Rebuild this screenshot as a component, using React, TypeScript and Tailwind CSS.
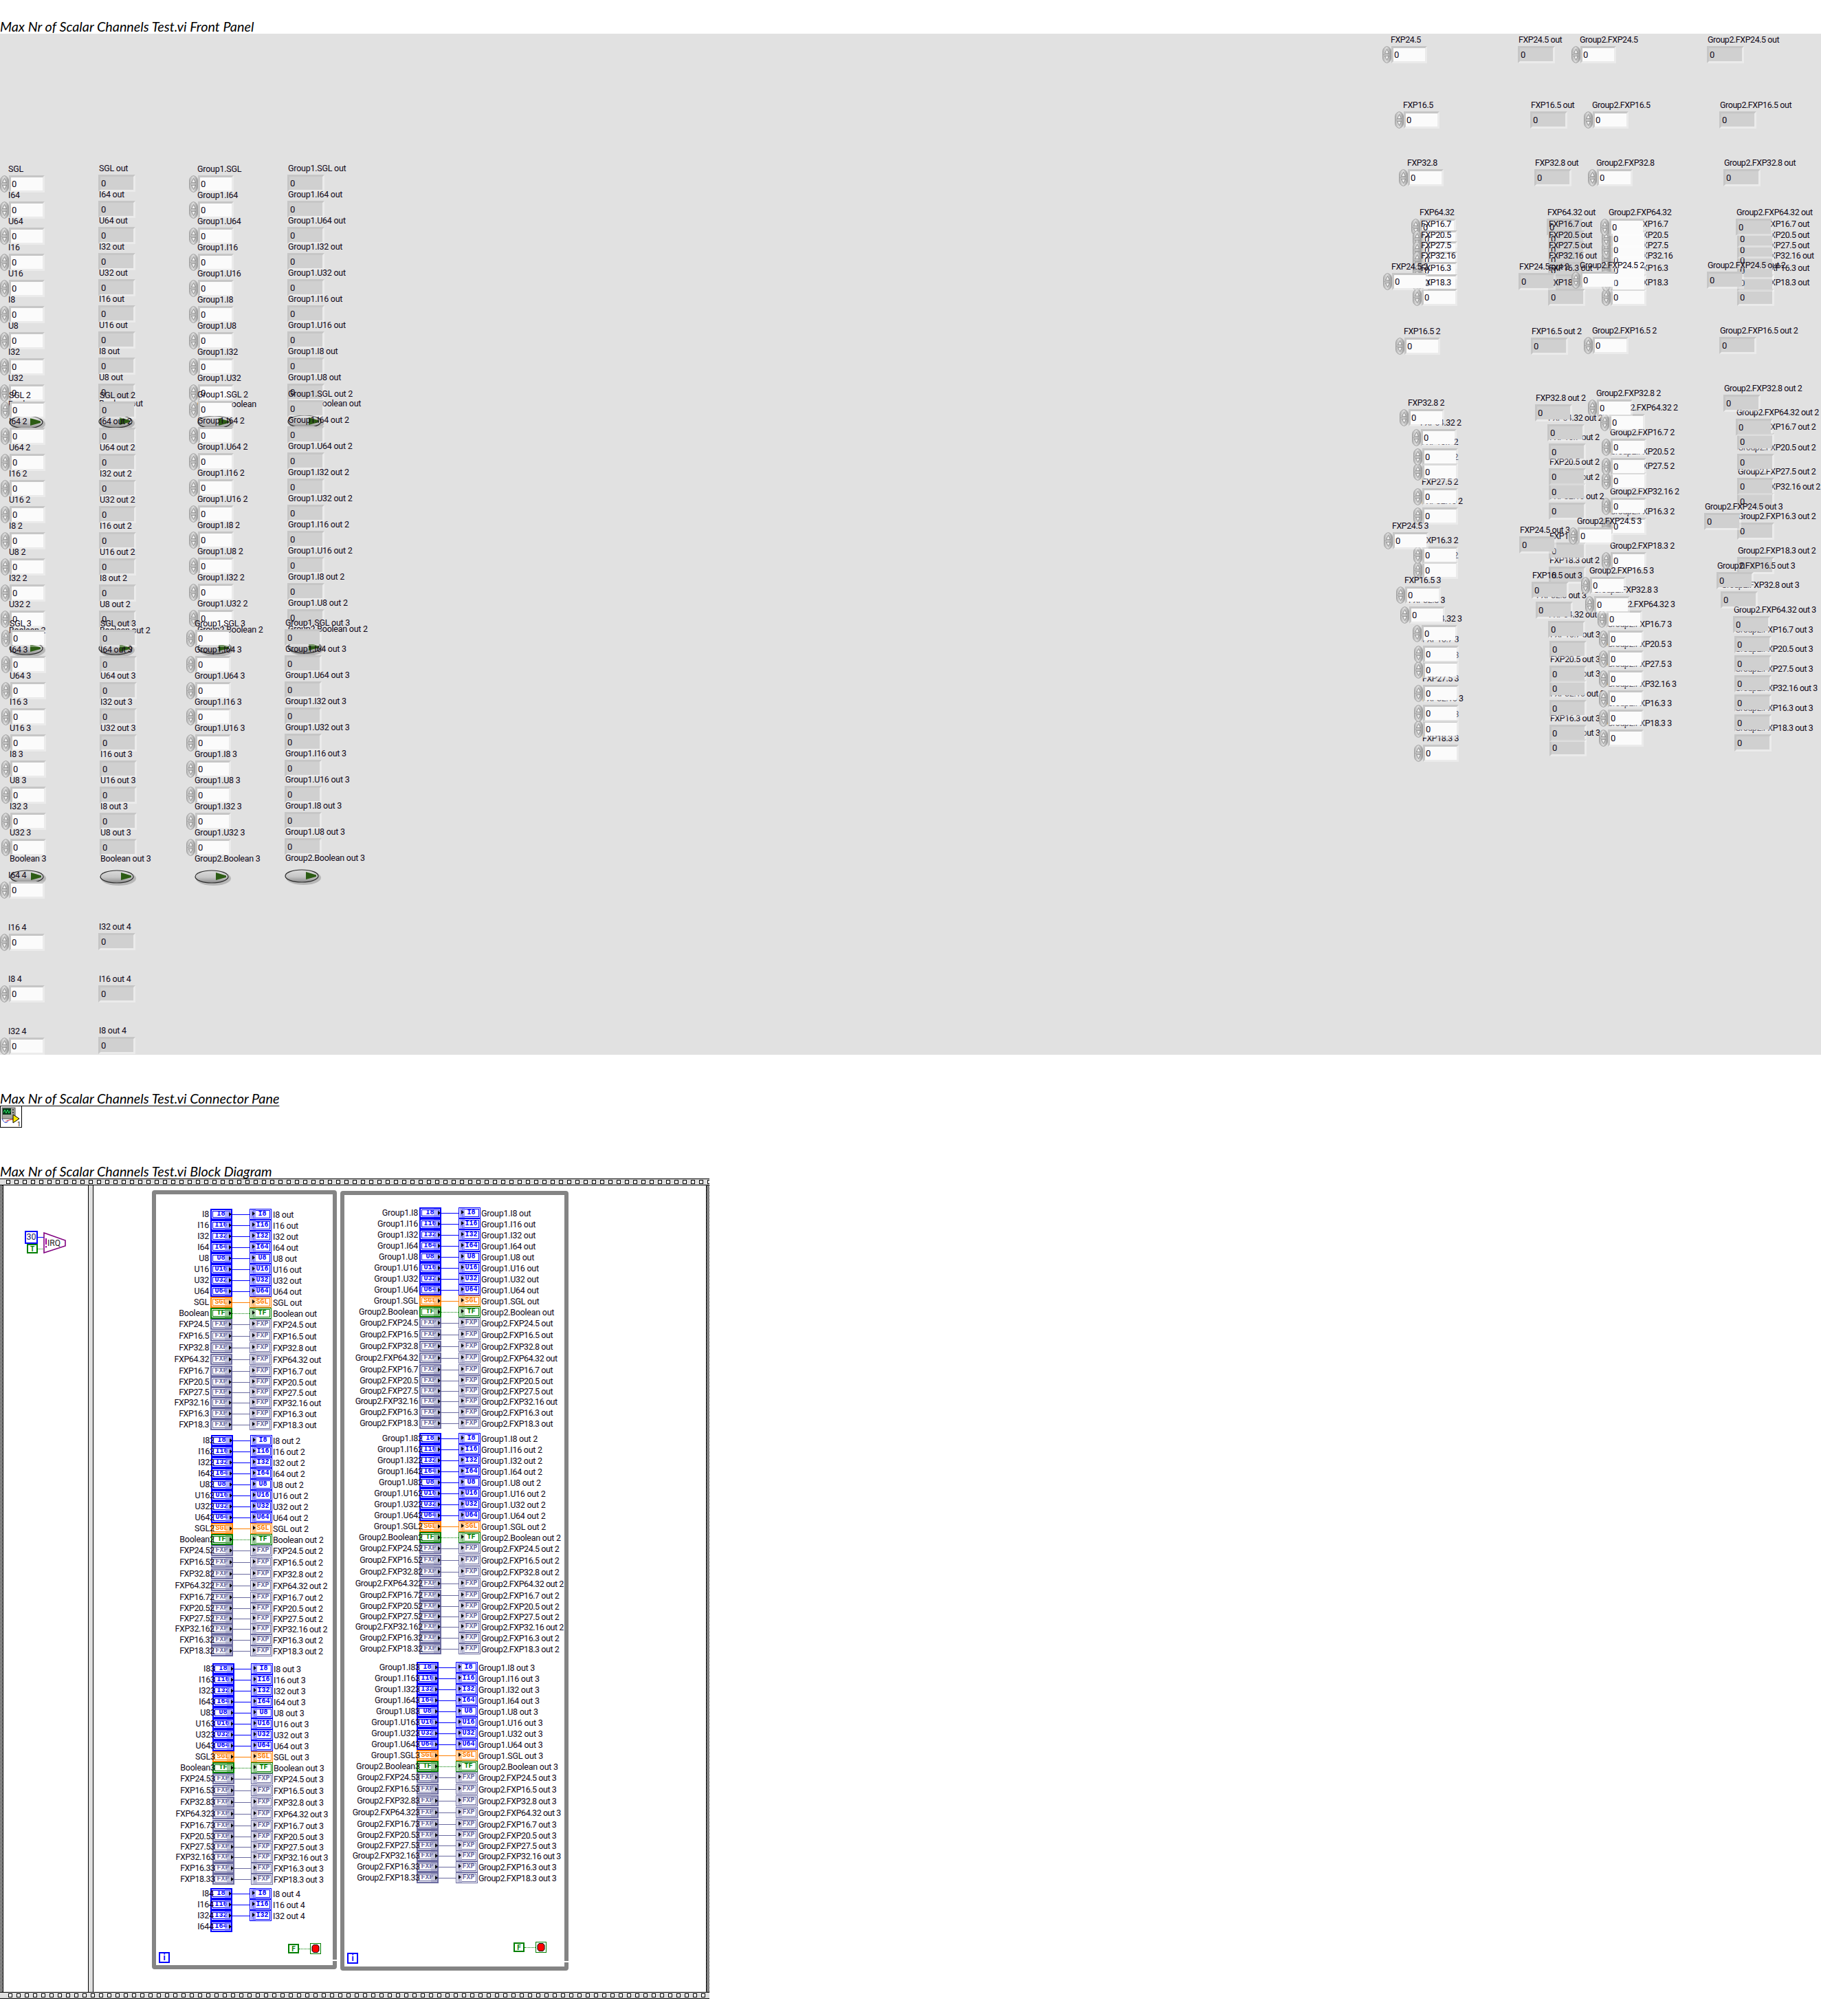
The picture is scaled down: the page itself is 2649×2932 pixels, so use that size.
import React from "react"

const LEFT_TYPES = ["SGL", "I64", "U64", "I16", "U16", "I8", "U8", "I32", "U32"]
const OUT_TYPES = ["SGL", "I64", "U64", "I32", "U32", "I16", "U16", "I8", "U8"]
const FXP = ["FXP24.5", "FXP16.5", "FXP32.8", "FXP64.32", "FXP16.7", "FXP20.5", "FXP27.5", "FXP32.16", "FXP16.3", "FXP18.3"]
const DIAGRAM = ["I8", "I16", "I32", "I64", "U8", "U16", "U32", "U64", "SGL", "Boolean", ...FXP]
const ROW_HEIGHT = [16, 16, 16, 16, 16, 16, 16, 16, 16, 16, 17, 17, 17, 17, 16, 15, 15, 16, 16, 16]
const PANEL_TOP = 49

const labelCls = "whitespace-nowrap text-[12.5px] leading-[16px] tracking-[-0.25px] text-[#100818]"
const fxpLabelCls = "whitespace-nowrap text-[12.5px] leading-[16px] tracking-[-0.45px] text-[#100818]"

function Spinner() {
  return (
    <svg className="block shrink-0" width="13" height="25" viewBox="0 0 13 25">
      <defs>
        <linearGradient id="spin" x1="0" x2="1" y1="0" y2="0">
          <stop offset="0" stopColor="#b4b4b4" />
          <stop offset="0.45" stopColor="#dedede" />
          <stop offset="1" stopColor="#989898" />
        </linearGradient>
      </defs>
      <path d="M6.5 0.5C10 1.5 12.5 4 12.5 8V17C12.5 21 10 23.5 6.5 24.5C3 23.5 0.5 21 0.5 17V8C0.5 4 3 1.5 6.5 0.5Z" fill="url(#spin)" stroke="#a0a0a0" />
      <line x1="1" x2="12" y1="12.5" y2="12.5" stroke="#a8a8a8" />
      <path d="M6.5 4.5L9.5 10.5H3.5Z" fill="#f0f0f0" stroke="#707070" strokeWidth="0.7" />
      <path d="M6.5 20.5L9.5 14.5H3.5Z" fill="#f0f0f0" stroke="#707070" strokeWidth="0.7" />
    </svg>
  )
}

// right and bottom frame bands let whatever is underneath show through
function NumBox({ indicator }: { indicator?: boolean }) {
  return (
    <div
      className={`h-[25px] shrink-0 border-[3px] border-t-[#c6c6c6] border-l-[#c6c6c6] border-r-[#ffffff59] border-b-[#ffffff59] bg-clip-padding pl-[1px] text-[13px] leading-[19px] text-[#100818] ${indicator ? "w-[54px] bg-[#d0d0d0]" : "w-[52px] bg-[#fbfbfb]"}`}
    >
      0
    </div>
  )
}

// label over a box, the way LabVIEW stacks them
function Cell({ label, indicator, labelClass }: { label: string; indicator?: boolean; labelClass: string }) {
  return (
    <>
      <div className={`${labelClass} ${indicator ? "pl-[1px]" : "pl-[12px]"}`}>{label}</div>
      <div className="mt-[1px] flex">
        {!indicator && <Spinner />}
        <NumBox indicator={indicator} />
      </div>
    </>
  )
}

// a single widget at its spot on the panel, x is the label's left edge
function Numeric({ label, x, cy, indicator, fxp }: { label: string; x: number; cy: number; indicator?: boolean; fxp?: boolean }) {
  return (
    <div className="absolute" style={{ left: indicator ? x - 1 : x - 12, top: cy - PANEL_TOP - 8 }}>
      <Cell label={label} indicator={indicator} labelClass={fxp ? fxpLabelCls : labelCls} />
    </div>
  )
}

function BooleanButton() {
  return (
    <svg className="mt-[8px] block" width="54" height="24" viewBox="0 0 54 24">
      <defs>
        <linearGradient id="btn" x1="0" x2="0" y1="0" y2="1">
          <stop offset="0" stopColor="#dcdcdc" />
          <stop offset="0.55" stopColor="#c6c6c6" />
          <stop offset="1" stopColor="#8c8c8c" />
        </linearGradient>
      </defs>
      <ellipse cx="27.5" cy="12.5" rx="25.5" ry="10.5" fill="#a4a4a4" opacity="0.7" />
      <ellipse cx="25" cy="10" rx="24" ry="9" fill="url(#btn)" stroke="#2c2c2c" strokeWidth="1.2" />
      <path d="M31 4L46 8.5L46 11L31 15Z" fill="#2c5c14" />
    </svg>
  )
}

function LeftColumn({ names, suffixOut, groups, boolName, indicator }: {
  names: string[]
  suffixOut: string
  boolName: string
  indicator?: boolean
  groups: { x: number; cy: number; btn: number }[]
}) {
  return (
    <>
      {groups.map((g, gi) => {
        const suffix = gi === 0 ? "" : ` ${gi + 1}`
        const left = indicator ? g.x - 1 : g.x - 12
        return (
          <div key={gi} className="absolute flex flex-col" style={{ left, top: g.cy - PANEL_TOP - 8 }}>
            {names.map((n) => (
              <div key={n} className="h-[38px]">
                <Cell label={`${n}${suffixOut}${suffix}`} indicator={indicator} labelClass={labelCls} />
              </div>
            ))}
            <div className={`${labelCls} ${indicator ? "pl-[1px]" : "pl-[12px]"}`}>{`${boolName}${suffixOut}${suffix}`}</div>
            <div style={{ marginLeft: g.btn - left }}>
              <BooleanButton />
            </div>
          </div>
        )
      })}
    </>
  )
}

const z2 = (z: number) => 30 + z / 3
const z5 = (z: number) => 530 + z / 2.613

const rightX = (a: number, b: number, c: number, d: number) => [a, b, c, d, d + 2, d + 2, d + 2, d + 2, d + 2, d + 2]

const RIGHT_GROUPS = [
  {
    suffix: "",
    reverse: [false, false, true, true],
    x: [rightX(2023, 2041, 2047, 2065), rightX(2209, 2227, 2233, 2251), rightX(2298, 2316, 2322, 2340), rightX(2484, 2502, 2508, 2526)],
    cy: [0, 1, 2, 3].map(() => [83, 368, 620, 836, 887, 935, 980, 1025, 1081, 1144].map(z2)),
  },
  {
    suffix: " 2",
    reverse: [true, true, true, true],
    x: [rightX(2024, 2042, 2048, 2066), rightX(2210, 2228, 2234, 2252), rightX(2298, 2316, 2322, 2340), rightX(2484, 2502, 2508, 2526)],
    cy: [
      [387.7, 482.3, 585.5, ...[221, 295, 354, 446, 519, 670, 727].map(z5)],
      [387.7, 482.3, 578.6, ...[203, 277, 371, 428, 501, 654, 745].map(z5)],
      [385.7, 480.7, 571.7, ...[164, 258, 333, 388, 483, 558, 689].map(z5)],
      [385.7, 480.7, 564.8, ...[182, 239, 315, 407, 464, 577, 708].map(z5)],
    ],
  },
  {
    suffix: " 3",
    reverse: [true, true, true, true],
    x: [rightX(2025, 2043, 2049, 2067), rightX(2211, 2229, 2235, 2253), rightX(2294, 2312, 2318, 2336), rightX(2480, 2498, 2504, 2522)],
    cy: [
      [613, 820, 895, 968, 1045, 1106, 1193, 1269, 1331, 1421].map(z5),
      [631, 802, 878, 951, 1027, 1121, 1176, 1252, 1345, 1400].map(z5),
      [595, 783, 857, 913, 989, 1063, 1138, 1214, 1288, 1363].map(z5),
      [541, 765, 838, 932, 1008, 1081, 1157, 1232, 1306, 1382].map(z5),
    ],
  },
]

function RightColumns() {
  return (
    <>
      {RIGHT_GROUPS.map((g, gi) =>
        [0, 1, 2, 3].map((col) => {
          const order = FXP.map((_, i) => i)
          if (g.reverse[col]) order.reverse()
          const prefix = col >= 2 ? "Group2." : ""
          const out = col % 2 === 1 ? " out" : ""
          return order.map((i) => (
            <Numeric
              key={`${gi}-${col}-${i}`}
              label={`${prefix}${FXP[i]}${out}${g.suffix}`}
              x={g.x[col][i]}
              cy={g.cy[col][i]}
              indicator={col % 2 === 1}
              fxp
            />
          ))
        })
      )}
    </>
  )
}

function FrontPanel() {
  return (
    <div className="relative h-[1485px] bg-[#e1e1e1]">
      <LeftColumn
        names={LEFT_TYPES}
        suffixOut=""
        boolName="Boolean"
        groups={[
          { x: 12, cy: 245.5, btn: 13 },
          { x: 13, cy: 575.4, btn: 13 },
          { x: 14, cy: 907, btn: 14 },
        ]}
      />
      <LeftColumn
        names={OUT_TYPES}
        suffixOut=" out"
        boolName="Boolean"
        indicator
        groups={[
          { x: 144, cy: 244.6, btn: 143 },
          { x: 145, cy: 574.5, btn: 143 },
          { x: 146, cy: 906.5, btn: 145 },
        ]}
      />
      <LeftColumn
        names={LEFT_TYPES.map((t) => `Group1.${t}`)}
        suffixOut=""
        boolName="Group2.Boolean"
        groups={[
          { x: 287, cy: 245.5, btn: 287 },
          { x: 287, cy: 573.7, btn: 287 },
          { x: 283, cy: 907, btn: 283 },
        ]}
      />
      <LeftColumn
        names={OUT_TYPES.map((t) => `Group1.${t}`)}
        suffixOut=" out"
        boolName="Group2.Boolean"
        indicator
        groups={[
          { x: 419, cy: 244.6, btn: 418 },
          { x: 419, cy: 572.8, btn: 418 },
          { x: 415, cy: 905.6, btn: 414 },
        ]}
      />
      <Numeric label="I64 4" x={12} cy={1272.6} />
      <Numeric label="I16 4" x={12} cy={1348.5} />
      <Numeric label="I8 4" x={12} cy={1424} />
      <Numeric label="I32 4" x={12} cy={1500} />
      <Numeric label="I32 out 4" x={144} cy={1347.6} indicator />
      <Numeric label="I16 out 4" x={144} cy={1423.5} indicator />
      <Numeric label="I8 out 4" x={144} cy={1499.4} indicator />
      <RightColumns />
    </div>
  )
}

const KINDS = {
  int: { border: "border-[#0000ff]", text: "text-[#0000ff]", light: "bg-[#8080ff]", solid: "bg-[#a0a0ff]", wire: "border-[#0000ff]" },
  sgl: { border: "border-[#ff8000]", text: "text-[#ff8000]", light: "bg-[#ffa850]", solid: "bg-[#ffc890]", wire: "border-[#ff8000]" },
  bool: { border: "border-[#007f00]", text: "text-[#007f00]", light: "bg-[#60a860]", solid: "bg-[#a8d0a8]", wire: "border-[#007f00]" },
  fxp: { border: "border-[#6b6ba0]", text: "text-[#6b6ba0]", light: "bg-[#9c9cc0]", solid: "bg-[#c4c4dc]", wire: "border-[#6b6ba0]" },
}

function kindOf(i: number) {
  if (i < 8) return KINDS.int
  if (i === 8) return KINDS.sgl
  if (i === 9) return KINDS.bool
  return KINDS.fxp
}

function termText(name: string) {
  if (name === "Boolean") return "TF"
  if (name.startsWith("FXP")) return "FXP"
  return name
}

const termFont = "font-['Liberation_Mono',monospace] font-bold text-[10px] leading-[10px]"

function Arrow({ className }: { className: string }) {
  return <div className={`absolute top-[3px] h-0 w-0 border-y-[3.5px] border-l-[4px] border-y-transparent border-l-black ${className}`} />
}

function ControlTerminal({ name, i }: { name: string; i: number }) {
  const k = kindOf(i)
  return (
    <div className={`relative flex h-[16px] w-[32px] shrink-0 border-2 bg-white p-[1px] ${k.border}`}>
      <div className={`flex flex-1 items-center justify-center border pr-[1px] ${k.border} ${k.text} ${termFont}`}>{termText(name)}</div>
      <div className={`absolute inset-y-0 right-0 w-[9px] opacity-60 ${k.light}`} />
      <Arrow className="right-[-1px]" />
    </div>
  )
}

function IndicatorTerminal({ name, i }: { name: string; i: number }) {
  const k = kindOf(i)
  return (
    <div className={`relative flex h-[16px] w-[32px] shrink-0 border bg-white py-[1px] pl-[4px] pr-[1px] ${k.border}`}>
      <div className={`absolute inset-y-0 left-[1px] w-[7px] ${k.solid}`} />
      <div className={`relative flex flex-1 items-center justify-center border pl-[2px] ${k.border} ${k.text} ${termFont}`}>{termText(name)}</div>
      <div className={`absolute inset-y-[1px] left-[4px] w-[4px] opacity-70 ${k.solid}`} />
      <Arrow className="left-[3px]" />
    </div>
  )
}

type Block = { gap: number; ctrl: number; ind: number; end: number; start: number; suffix: string; rows?: number; indRows?: number }

// rows of one channel set inside a loop: label, control, wire, indicator, label
function Terminals({ block, inner, group }: { block: Block; inner: number; group: (i: number) => string }) {
  const count = block.rows ?? 20
  const indCount = block.indRows ?? 20
  return (
    <div className="flex flex-col" style={{ marginTop: block.gap }}>
      {DIAGRAM.slice(0, count).map((name, i) => {
        const k = kindOf(i)
        const cls = i >= 10 ? fxpLabelCls : labelCls
        return (
          <div key={name} className="flex items-start" style={{ height: ROW_HEIGHT[i] }}>
            <div className={`relative z-10 flex justify-end ${cls}`} style={{ width: block.end - inner, marginRight: block.ctrl - block.end }}>
              <span className="relative">
                {group(i)}
                {name}
                <span className="absolute left-full top-0">{block.suffix}</span>
              </span>
            </div>
            <ControlTerminal name={name} i={i} />
            {i < indCount && (
              <>
                <div className={`mt-[8px] border-t ${k.wire} ${i === 9 ? "border-dotted" : ""}`} style={{ width: block.ind - block.ctrl - 32 }} />
                <IndicatorTerminal name={name} i={i} />
                <div className={`pt-[1px] ${cls}`} style={{ marginLeft: block.start - block.ind - 32 }}>
                  {`${group(i)}${name} out${block.suffix}`}
                </div>
              </>
            )}
          </div>
        )
      })}
    </div>
  )
}

const LOOP1: Block[] = [
  { gap: 21, ctrl: 306, ind: 363, end: 304, start: 397, suffix: "" },
  { gap: 7, ctrl: 307, ind: 364, end: 305, start: 397, suffix: " 2" },
  { gap: 10, ctrl: 309, ind: 365, end: 306, start: 398, suffix: " 3" },
  { gap: 5, ctrl: 306, ind: 363, end: 304, start: 397, suffix: " 4", rows: 4, indRows: 3 },
]

const LOOP2: Block[] = [
  { gap: 18, ctrl: 610, ind: 667, end: 608, start: 700, suffix: "" },
  { gap: 6, ctrl: 610, ind: 667, end: 608, start: 700, suffix: " 2" },
  { gap: 11, ctrl: 606, ind: 663, end: 604, start: 696, suffix: " 3" },
]

function FilmStrip({ start }: { start: number }) {
  return (
    <div className="flex h-[10px] items-center gap-[6px] overflow-hidden border-y border-black bg-[#e0e0e0]" style={{ paddingLeft: start }}>
      {Array.from({ length: 86 }).map((_, i) => (
        <div key={i} className="h-[6px] w-[6px] shrink-0 border border-black bg-white" />
      ))}
    </div>
  )
}

const dither = "w-[4px] shrink-0 bg-[repeating-conic-gradient(#000_0_25%,#fff_0_50%)] bg-[length:2px_2px]"

function BoolConst({ value, className }: { value: string; className: string }) {
  return (
    <div className={`absolute flex h-[14px] w-[16px] items-center justify-center border-2 border-[#007f00] bg-white text-[10px] font-bold text-[#007f00] ${className}`}>
      {value}
    </div>
  )
}

function StopIcon({ className }: { className: string }) {
  return (
    <svg className={`absolute ${className}`} width="16" height="16" viewBox="0 0 16 16">
      <rect x="0.5" y="0.5" width="15" height="15" fill="#fff" stroke="#007f00" />
      <path d="M5 2.5H11L13 5V11L11 13.5H5L3 11V5Z" fill="#ff0000" stroke="#000" />
    </svg>
  )
}

function IterBox({ className }: { className: string }) {
  return (
    <div className={`absolute flex h-[16px] w-[16px] items-center justify-center border-2 border-[#0000ff] bg-white text-[12px] font-bold leading-[12px] text-[#0000ff] ${className}`}>
      i
    </div>
  )
}

function WhileLoop({ className, children }: { className: string; children: React.ReactNode }) {
  return (
    <div className={`absolute flex flex-col rounded-[4px] border-[6px] border-[#848484] bg-white ${className}`}>
      {children}
      <div className="absolute bottom-[6px] right-[-6px] h-[2px] w-[6px] bg-white" />
    </div>
  )
}

function BlockDiagram() {
  const group2 = (i: number) => (i < 9 ? "Group1." : "Group2.")
  return (
    <div className="relative flex h-[1193px] w-[1032px] flex-col">
      <FilmStrip start={9} />
      <div className="flex flex-1">
        <div className={dither} />
        <div className="w-[125px] border-x border-black bg-white" />
        <div className="w-[6px] bg-[#e0e0e0]" />
        <div className="flex-1 border-x border-black bg-white" />
        <div className={dither} />
      </div>
      <FilmStrip start={12} />

      {/* timed constants in the first frame */}
      <div className="absolute left-[36px] top-[76px] flex h-[19px] w-[19px] items-center justify-center border-2 border-[#0000ff] bg-white text-[12.5px] text-[#1c1c6c]">
        30
      </div>
      <div className="absolute left-[55px] top-[85px] h-[1px] w-[9px] bg-[#0000ff]" />
      <BoolConst value="T" className="left-[39px] top-[95px]" />
      <div className="absolute left-[55px] top-[102px] w-[9px] border-t border-dotted border-[#007f00]" />
      <svg className="absolute left-[63px] top-[78px]" width="33" height="31" viewBox="0 0 33 31">
        <path d="M1 1L32 12V20L1 30Z" fill="#fff" stroke="#800080" strokeWidth="1.6" />
        <rect x="3" y="9" width="2" height="9" fill="#a000a0" />
        <rect x="3" y="20" width="2" height="2.5" fill="#a000a0" />
        <text x="6" y="20" fontSize="12" fill="#202020" fontFamily="Roboto, sans-serif">IRQ</text>
      </svg>

      <WhileLoop className="left-[221px] top-[17px] h-[1133px] w-[269px]">
        {LOOP1.map((b) => (
          <Terminals key={b.suffix} block={b} inner={227} group={() => ""} />
        ))}
      </WhileLoop>
      <WhileLoop className="left-[495px] top-[18px] h-[1134px] w-[332px]">
        {LOOP2.map((b) => (
          <Terminals key={b.suffix} block={b} inner={501} group={group2} />
        ))}
      </WhileLoop>

      <BoolConst value="F" className="left-[419px] top-[1113px]" />
      <div className="absolute left-[435px] top-[1120px] w-[16px] border-t border-dotted border-[#007f00]" />
      <StopIcon className="left-[451px] top-[1112px]" />
      <IterBox className="left-[231px] top-[1125px]" />

      <BoolConst value="F" className="left-[747px] top-[1111px]" />
      <div className="absolute left-[763px] top-[1118px] w-[16px] border-t border-dotted border-[#007f00]" />
      <StopIcon className="left-[779px] top-[1110px]" />
      <IterBox className="left-[505px] top-[1126px]" />
    </div>
  )
}

function ConnectorIcon() {
  return (
    <svg width="32" height="32" viewBox="0 0 32 32" className="block">
      <rect x="0.5" y="0.5" width="31" height="31" fill="#fff" stroke="#000" />
      <rect x="3" y="3" width="19" height="16" fill="#a8a8a0" stroke="#505050" />
      <rect x="4" y="4" width="12" height="9" fill="#003818" />
      <path d="M5 10L7 6L9 11L11 6L13 11L15 7" fill="none" stroke="#30e060" />
      <rect x="18" y="5" width="2" height="2" fill="#404040" />
      <rect x="18" y="9" width="2" height="2" fill="#404040" />
      <path d="M3 19C6 26 10 26 12 22" fill="none" stroke="#2040d0" />
      <path d="M8 23C12 21 16 20 24 20" fill="none" stroke="#e02020" />
      <path d="M19 13L28 19L19 25Z" fill="#ffe800" stroke="#000" />
      <text x="25" y="30" fontSize="9" fill="#000" fontFamily="Roboto, sans-serif">1</text>
    </svg>
  )
}

function Title({ children, className }: { children: string; className: string }) {
  return (
    <div className={`flex items-end whitespace-nowrap font-['Lato',sans-serif] text-[19.8px] italic leading-[20px] text-black underline underline-offset-[3px] ${className}`}>
      {children}
    </div>
  )
}

export default function App() {
  return (
    <div className="h-[2932px] w-[2649px] overflow-hidden bg-white font-['Roboto',sans-serif]">
      <Title className="h-[49px] pb-[1px]">Max Nr of Scalar Channels Test.vi Front Panel</Title>
      <FrontPanel />
      <Title className="h-[74px] pb-[1px]">Max Nr of Scalar Channels Test.vi Connector Pane</Title>
      <ConnectorIcon />
      <Title className="h-[74px] pb-[1px]">Max Nr of Scalar Channels Test.vi Block Diagram</Title>
      <BlockDiagram />
    </div>
  )
}
